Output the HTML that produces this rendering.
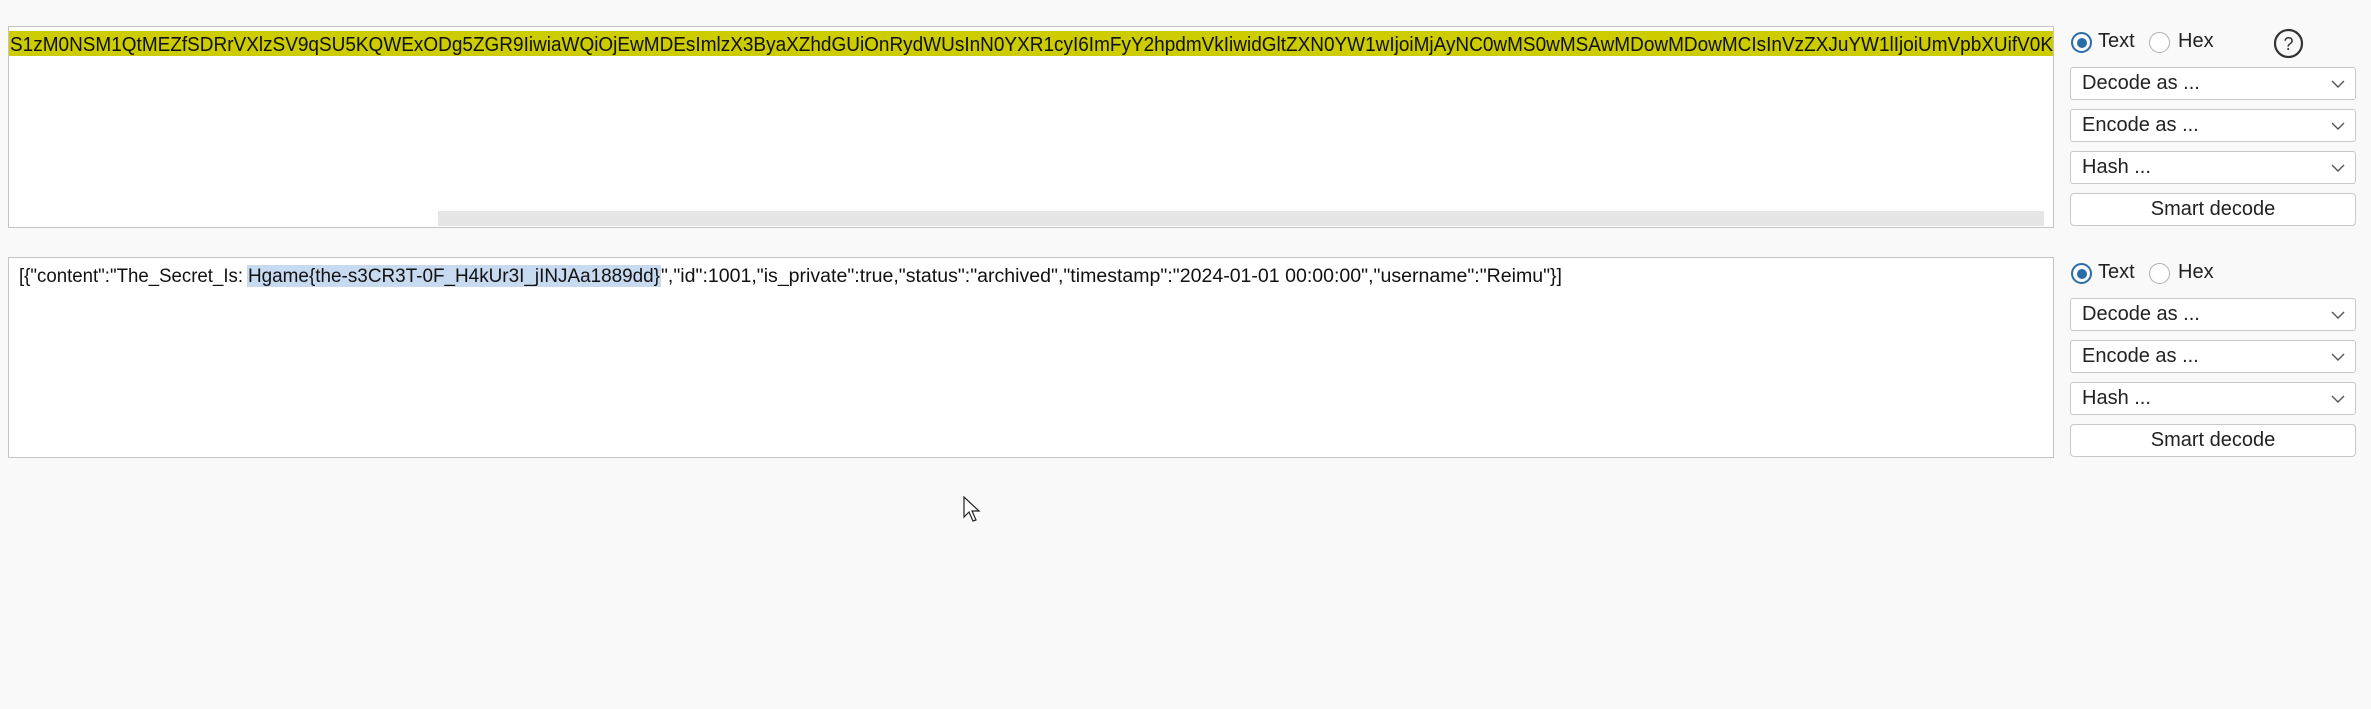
<!DOCTYPE html>
<html><head><meta charset="utf-8"><style>
html,body{margin:0;padding:0;background:#f9f9f9;width:2371px;height:709px;overflow:hidden;font-family:"Liberation Sans",sans-serif;}
.ta{position:absolute;left:8px;width:2044px;background:#fff;border:1px solid #c4c4c4;}
.rb{position:absolute;width:21px;height:21px;border-radius:50%;box-sizing:border-box;}
.on{border:2px solid #2a6ca8;}
.on::after{content:"";position:absolute;left:3.5px;top:3.5px;width:10px;height:10px;border-radius:50%;background:#2a6ca8;}
.off{border:1px solid #b0b0b0;background:#fff;}
.lbl{position:absolute;font-size:20px;color:#222;}
.dd{position:absolute;left:2070px;width:286px;height:33px;box-sizing:border-box;border:1px solid #c8c8c8;border-radius:3px;background:#fff;font-size:20px;color:#222;line-height:31px;padding-left:11px;}
.dd svg{position:absolute;right:10px;top:12px;}
.btn{position:absolute;left:2070px;width:286px;height:33px;box-sizing:border-box;border:1px solid #c8c8c8;border-radius:4px;background:#fff;font-size:20px;color:#222;line-height:31px;text-align:center;}
</style></head><body>
<div class="ta" style="top:26px;height:200px;"></div>
<div style="position:absolute;left:9px;top:31px;width:2044px;height:25px;background:#cccc00;"></div>
<div style="position:absolute;left:438px;top:211px;width:1606px;height:15px;background:#e5e5e5;"></div>
<svg style="position:absolute;left:0;top:0" width="2060" height="300">
<text x="10" y="51" font-size="20" fill="#111" font-family="Liberation Sans" textLength="2043" lengthAdjust="spacingAndGlyphs">S1zM0NSM1QtMEZfSDRrVXlzSV9qSU5KQWExODg5ZGR9IiwiaWQiOjEwMDEsImlzX3ByaXZhdGUiOnRydWUsInN0YXR1cyI6ImFyY2hpdmVkIiwidGltZXN0YW1wIjoiMjAyNC0wMS0wMSAwMDowMDowMCIsInVzZXJuYW1lIjoiUmVpbXUifV0K</text>
</svg>
<div class="ta" style="top:257px;height:199px;"></div>
<div style="position:absolute;left:247px;top:265px;width:414px;height:22px;background:#c8daf0;"></div>
<svg style="position:absolute;left:0;top:0" width="2060" height="460">
<text x="19" y="282" font-size="19" fill="#111" font-family="Liberation Sans" textLength="224" lengthAdjust="spacingAndGlyphs">[{"content":"The_Secret_Is:</text>
<text x="248" y="282" font-size="19" fill="#111" font-family="Liberation Sans" textLength="412" lengthAdjust="spacingAndGlyphs">Hgame{the-s3CR3T-0F_H4kUr3I_jINJAa1889dd}</text>
<text x="661" y="282" font-size="19" fill="#111" font-family="Liberation Sans" textLength="901" lengthAdjust="spacingAndGlyphs">","id":1001,"is_private":true,"status":"archived","timestamp":"2024-01-01 00:00:00","username":"Reimu"}]</text>
</svg>

<div class="rb on" style="left:2071px;top:32px;"></div><div class="lbl" style="left:2098px;top:30px;">Text</div>
<div class="rb off" style="left:2149px;top:32px;"></div><div class="lbl" style="left:2178px;top:30px;">Hex</div>
<svg style="position:absolute;left:2273px;top:28px" width="31" height="31"><circle cx="15.5" cy="15.5" r="13.5" fill="none" stroke="#333" stroke-width="2.2"/><text x="15.5" y="22" font-size="18" text-anchor="middle" fill="#333" font-family="Liberation Sans">?</text></svg>
<div class="dd" style="top:67px;">Decode as ...<svg width="14" height="9"><path d="M1 1 L7 7 L13 1" fill="none" stroke="#555" stroke-width="1.4"/></svg></div>
<div class="dd" style="top:109px;">Encode as ...<svg width="14" height="9"><path d="M1 1 L7 7 L13 1" fill="none" stroke="#555" stroke-width="1.4"/></svg></div>
<div class="dd" style="top:151px;">Hash ...<svg width="14" height="9"><path d="M1 1 L7 7 L13 1" fill="none" stroke="#555" stroke-width="1.4"/></svg></div>
<div class="btn" style="top:193px;">Smart decode</div>

<div class="rb on" style="left:2071px;top:263px;"></div><div class="lbl" style="left:2098px;top:261px;">Text</div>
<div class="rb off" style="left:2149px;top:263px;"></div><div class="lbl" style="left:2178px;top:261px;">Hex</div>
<div class="dd" style="top:298px;">Decode as ...<svg width="14" height="9"><path d="M1 1 L7 7 L13 1" fill="none" stroke="#555" stroke-width="1.4"/></svg></div>
<div class="dd" style="top:340px;">Encode as ...<svg width="14" height="9"><path d="M1 1 L7 7 L13 1" fill="none" stroke="#555" stroke-width="1.4"/></svg></div>
<div class="dd" style="top:382px;">Hash ...<svg width="14" height="9"><path d="M1 1 L7 7 L13 1" fill="none" stroke="#555" stroke-width="1.4"/></svg></div>
<div class="btn" style="top:424px;">Smart decode</div>

<svg style="position:absolute;left:963px;top:496px" width="20" height="28"><path d="M1 1 L1 21 L6 16 L10 25 L13 24 L9 15 L16 15 Z" fill="#fff" stroke="#222" stroke-width="1.2"/></svg>
</body></html>
